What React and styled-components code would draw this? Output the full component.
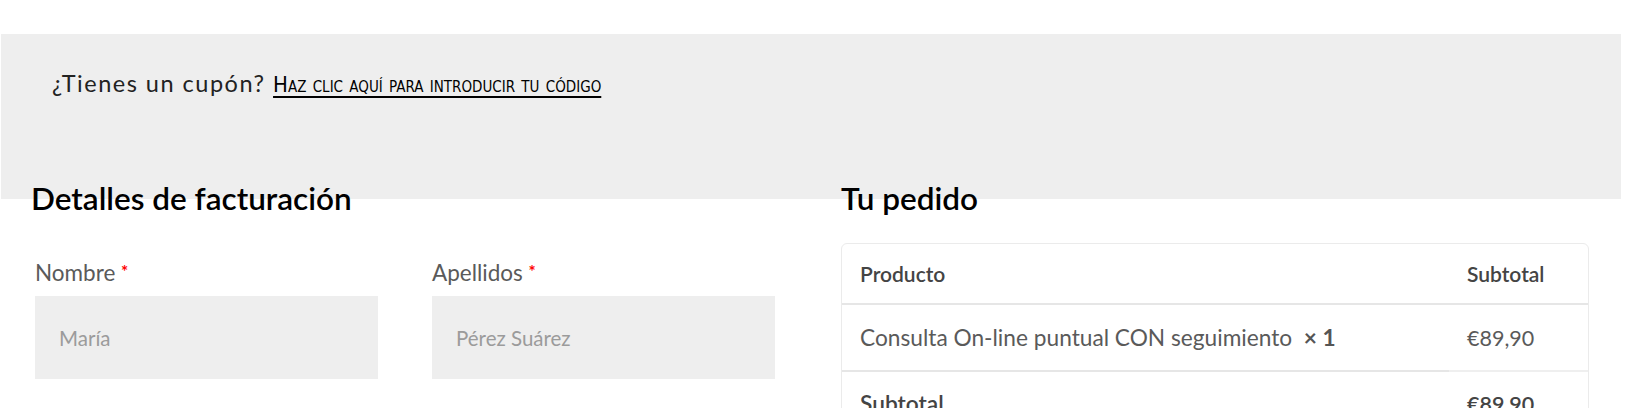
import React from "react";
import styled, { createGlobalStyle } from "styled-components";

const GlobalStyle = createGlobalStyle`
  html, body {
    margin: 0;
    padding: 0;
    background: #ffffff;
  }
  body {
    font-family: Lato, "Noto Sans", sans-serif;
    color: #555555;
  }
  * { box-sizing: border-box; }
`;

const Page = styled.div`
  padding-top: 34px;
  width: 1632px;
  height: 408px;
  overflow: hidden;
`;

const CouponBand = styled.div`
  margin: 0 11px 0 1px;
  height: 165px;
  background: #eeeeee;
  padding: 34px 0 0 51px;
`;

const CouponText = styled.p`
  margin: 0;
  font-family: Lato, "Noto Sans", sans-serif;
  font-weight: 400;
  font-size: 23.5px;
  letter-spacing: 1.5px;
  line-height: 30px;
  color: #222222;
`;

const CouponLink = styled.a`
  font-family: "Liberation Sans Narrow", "DejaVu Sans Condensed", "Roboto Condensed", sans-serif;
  font-variant: small-caps;
  font-weight: 400;
  font-size: 22px;
  letter-spacing: 0;
  color: #000000;
  text-decoration: underline;
  text-decoration-thickness: 2px;
  text-underline-offset: 4px;
`;

const Columns = styled.div`
  margin-top: -19px;
  display: grid;
  grid-template-columns: 744px 749px;
  column-gap: 66px;
  padding: 0 42px 0 31px;
`;

const Column = styled.section`
  display: flex;
  flex-direction: column;
`;

const SectionTitle = styled.h3`
  margin: 0;
  font-family: Lato, "Noto Sans", sans-serif;
  font-weight: 600;
  font-size: 31.5px;
  line-height: 37px;
  color: #000000;
`;

const FieldRow = styled.div`
  margin-top: 42px;
  padding-left: 4px;
  display: grid;
  grid-template-columns: 343px 343px;
  column-gap: 54px;
`;

const Field = styled.div`
  display: flex;
  flex-direction: column;
  gap: 10px;
`;

const Label = styled.label`
  font-size: 22.5px;
  line-height: 26px;
  color: #5a5a5a;
`;

const Req = styled.abbr`
  color: #ff0000;
  font-weight: 700;
  font-size: 17px;
  text-decoration: none;
  vertical-align: 3px;
`;

const TextInput = styled.input`
  height: 83px;
  width: 100%;
  border: none;
  outline: none;
  background: #eeeeee;
  padding: 0 24px;
  font-family: Lato, "Noto Sans", sans-serif;
  font-size: 20.5px;
  color: #333333;
  &::placeholder {
    color: #9b9b9b;
  }
`;

const OrderTable = styled.table`
  margin-top: 26px;
  width: 748px;
  border: 1px solid #ebebeb;
  border-radius: 6px;
  border-collapse: separate;
  border-spacing: 0;
`;

const HeadCell = styled.th`
  height: 61px;
  padding: 0 18px;
  text-align: left;
  font-size: 21px;
  font-weight: 600;
  color: #444444;
  border-bottom: 2px solid #e6e6e6;
  width: ${(p) => (p.$narrow ? "139px" : "auto")};
`;

const Cell = styled.td`
  height: 65px;
  padding: 0 18px;
  font-size: 22.7px;
  font-weight: ${(p) => (p.$strong ? 600 : 400)};
  color: ${(p) => (p.$strong ? "#444444" : "#5a5a5a")};
  border-top: ${(p) => (p.$divider ? `2px solid ${p.$divider}` : "none")};
`;

const Price = styled.span`
  font-size: 21.5px;
`;

const Qty = styled.strong`
  font-weight: 700;
  color: #555555;
`;

export default function App() {
  return (
    <>
      <GlobalStyle />
      <Page>
        <CouponBand>
          <CouponText>
            ¿Tienes un cupón?{" "}
            <CouponLink href="#">Haz clic aquí para introducir tu código</CouponLink>
          </CouponText>
        </CouponBand>
        <Columns>
          <Column>
            <SectionTitle>Detalles de facturación</SectionTitle>
            <FieldRow>
              <Field>
                <Label>
                  Nombre <Req title="obligatorio">*</Req>
                </Label>
                <TextInput placeholder="María" />
              </Field>
              <Field>
                <Label>
                  Apellidos <Req title="obligatorio">*</Req>
                </Label>
                <TextInput placeholder="Pérez Suárez" />
              </Field>
            </FieldRow>
          </Column>
          <Column>
            <SectionTitle>Tu pedido</SectionTitle>
            <OrderTable>
              <thead>
                <tr>
                  <HeadCell>Producto</HeadCell>
                  <HeadCell $narrow>Subtotal</HeadCell>
                </tr>
              </thead>
              <tbody>
                <tr>
                  <Cell>
                    Consulta On-line puntual CON seguimiento{"\u00a0\u00a0"}
                    <Qty>×{"\u00a0"}1</Qty>
                  </Cell>
                  <Cell>
                    <Price>€89,90</Price>
                  </Cell>
                </tr>
              </tbody>
              <tfoot>
                <tr>
                  <Cell $strong $divider="#e6e6e6">Subtotal</Cell>
                  <Cell $strong $divider="#efefef">
                    <Price>€89,90</Price>
                  </Cell>
                </tr>
                <tr>
                  <Cell $strong $divider="#e6e6e6">Total</Cell>
                  <Cell $strong $divider="#efefef">
                    <Price>€89,90</Price>
                  </Cell>
                </tr>
              </tfoot>
            </OrderTable>
          </Column>
        </Columns>
      </Page>
    </>
  );
}
